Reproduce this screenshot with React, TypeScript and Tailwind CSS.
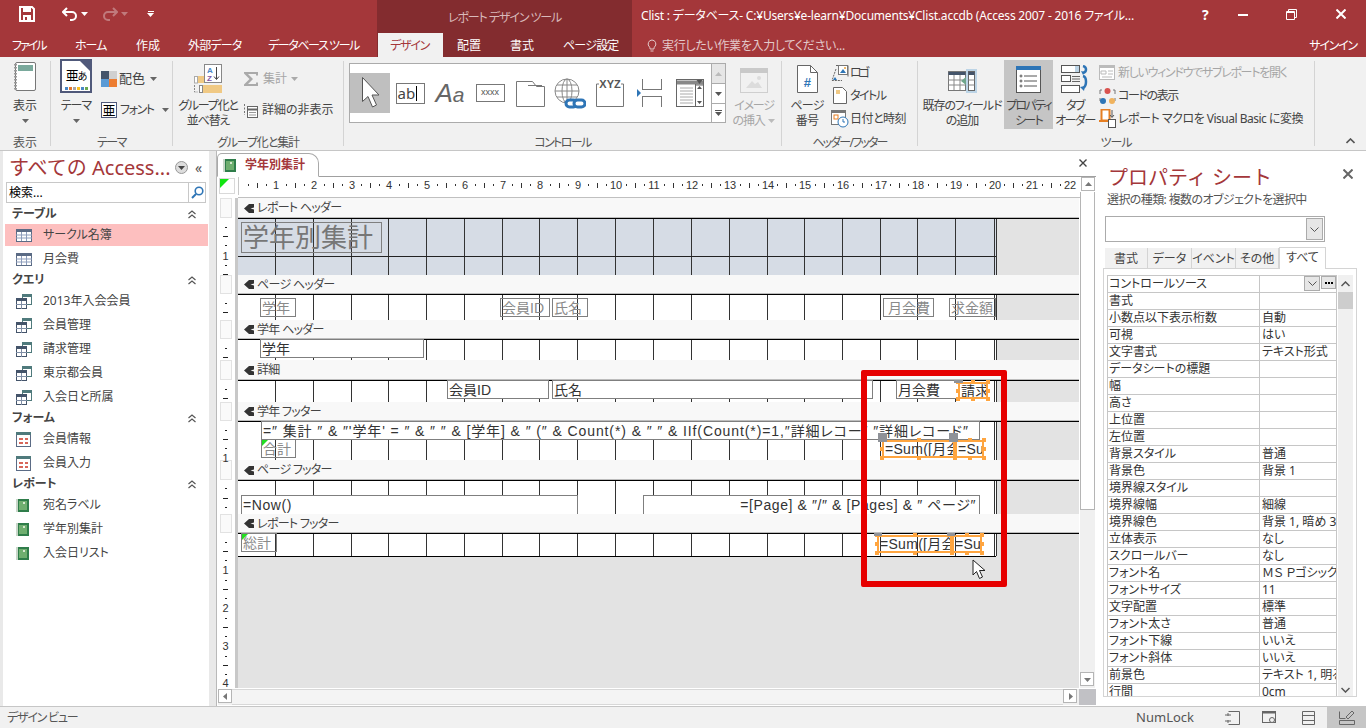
import React from "react";

const sans = "[font-family:'Noto_Sans','Noto_Sans_CJK_JP',sans-serif] [font-feature-settings:'palt']";

/* ---------- small drawings ---------- */
const Svg = ({ w, h, children, className }: { w: number; h: number; children: React.ReactNode; className?: string }) => (
  <svg width={w} height={h} viewBox={`0 0 ${w} ${h}`} className={className} style={{ display: "block", flex: "none" }}>
    {children}
  </svg>
);

const Caret = ({ c = "#666" }: { c?: string }) => (
  <Svg w={7} h={4} className="inline-block"><path d="M0 0h7L3.5 4z" fill={c} /></Svg>
);

const ViewIcon = () => (
  <Svg w={26} h={32}>
    <rect x="3.5" y="1.5" width="20" height="28" rx="1.5" fill="#fff" stroke="#777" />
    <rect x="6" y="4" width="15" height="6" fill="#7aa99c" />
    <path d="M3.5 3v26" stroke="#999" strokeWidth="3" strokeDasharray="1.5 1.5" />
  </Svg>
);
const ThemeIcon = () => (
  <div className="w-[32px] h-[34px] border-2 border-[#50597a] bg-white flex flex-col items-center relative">
    <span className="text-[13px] leading-[20px] mt-[4px] text-black tracking-[-1px]">亜<span className="text-[10px]">あ</span></span>
    <div className="flex gap-[1px] mt-[1px]">
      {["#4a86c5", "#e8772e", "#a6a6a6", "#fcc21b", "#4a86c5", "#6aa84f"].map((c, i) => (
        <div key={i} className="w-[3px] h-[3px]" style={{ background: c }} />
      ))}
    </div>
    <Svg w={10} h={10} className="absolute right-0 top-0"><path d="M0 0h10v10z" fill="#50597a" /></Svg>
  </div>
);
const ColorIcon = () => (
  <Svg w={16} h={16}>
    <rect width="8" height="8" fill="#44546a" /><rect x="8" width="8" height="8" fill="#d0d0d0" />
    <rect y="8" width="8" height="8" fill="#5b9bd5" /><rect x="8" y="8" width="8" height="8" fill="#ed7d31" />
  </Svg>
);
const FontIcon = () => (
  <div className="w-[16px] h-[16px] border border-[#50597a] bg-white text-[13px] leading-[14px] text-center text-black">亜</div>
);
const SortIcon = () => (
  <Svg w={30} h={29}>
    <rect x="11.5" y="0.5" width="17" height="18" fill="#fff" stroke="#888" />
    <text x="14" y="9" fontSize="8" fontWeight="700" fill="#4a86c5" fontFamily="Liberation Sans">A</text>
    <text x="14" y="17" fontSize="8" fontWeight="700" fill="#7d55a5" fontFamily="Liberation Sans">Z</text>
    <path d="M23.5 3v12M21 12.5l2.5 3 2.5-3" stroke="#444" fill="none" />
    <rect x="4" y="12" width="7" height="7" fill="#f0c984" /><rect x="1.5" y="12.5" width="3" height="6.5" fill="#fff" stroke="#aaa" />
    <rect x="10" y="21" width="19" height="8" fill="#f0c984" /><rect x="6.5" y="21.5" width="3" height="7" fill="#fff" stroke="#888" />
    <path d="M1.5 21v7h3" stroke="#888" fill="none" strokeDasharray="2 1" />
  </Svg>
);
const SigmaIcon = () => (
  <Svg w={16} h={16}><path d="M1 1h14v3.5h-2V3H5l5 5-5 5h8v-1.5h2V15H1v-1.5L6.5 8 1 2.5z" fill="#aaa" /></Svg>
);
const HideIcon = () => (
  <Svg w={15} h={15}>
    <rect x="4.5" y="3.5" width="10" height="11" fill="#fff" stroke="#666" />
    <path d="M4.5 6.5h10" stroke="#666" strokeWidth="2" /><path d="M6 9.5h7M6 12h7" stroke="#999" />
    <path d="M1.5 1v11" stroke="#777" strokeDasharray="2 1.5" />
  </Svg>
);
const ArrowIcon = () => (
  <Svg w={20} h={34}>
    <path d="M2.5 1.5v24l5.5-5 4.5 10.5 4-2-4.5-10h7z" fill="#fff" stroke="#555" strokeWidth="1" />
  </Svg>
);
const LabelIcon = () => (
  <div className="w-[29px] h-[21px] border border-[#777] bg-white flex items-center pl-[1px] text-[#444] text-[15px] leading-none">
    ab<span className="w-[1px] h-[15px] bg-black ml-[1px]" />
  </div>
);
const AaIcon = () => <span className="[font-family:'Liberation_Sans',sans-serif] italic text-[26px] leading-none text-[#666]">A<span className="text-[21px]">a</span></span>;
const XxxxIcon = () => (
  <div className="w-[29px] h-[18px] border border-[#777] bg-white text-[9px] leading-[15px] text-center text-[#555] [font-family:'Liberation_Sans',sans-serif]">xxxx</div>
);
const FolderIcon = () => (
  <Svg w={29} h={27}>
    <path d="M0.5 26.5V1.5h16l4 5h8v20z" fill="#fff" stroke="#777" />
    <path d="M12 5.5h14" stroke="#777" />
  </Svg>
);
const GlobeIcon = () => (
  <Svg w={32} h={31}>
    <g stroke="#888" fill="none">
      <circle cx="13" cy="13" r="12" />
      <ellipse cx="13" cy="13" rx="5" ry="12" />
      <path d="M1 13h24M3 7h20M3 19h20M13 1v24" />
    </g>
    <g stroke="#2e75b6" strokeWidth="3" fill="#fff">
      <rect x="12" y="22" width="11" height="7" rx="3.5" />
      <rect x="20" y="22" width="11" height="7" rx="3.5" />
    </g>
  </Svg>
);
const XyzIcon = () => (
  <Svg w={29} h={28}>
    <path d="M3 5H0.5v22.5h27V5H25" fill="#fff" stroke="#777" />
    <text x="14" y="9" textAnchor="middle" fontSize="11" fontWeight="700" fill="#555" fontFamily="Liberation Sans">XYZ</text>
  </Svg>
);
const BreakIcon = () => (
  <Svg w={26} h={28}>
    <path d="M5.5 0v11M24.5 0v11M5.5 17v11M24.5 17v11M5.5 10.5h19M5.5 17.5h19" stroke="#777" fill="none" />
    <path d="M0 10l4 4-4 4z" fill="#2e75b6" />
  </Svg>
);
const ListIcon = () => (
  <Svg w={28} h={28}>
    <rect x="0.5" y="0.5" width="27" height="27" fill="#fff" stroke="#666" />
    <path d="M1 3.5h26" stroke="#888" strokeWidth="4" />
    <path d="M4 9h13M4 12h13M4 15h13M4 18h13M4 21h13M4 24h13" stroke="#aaa" />
    <path d="M19.5 5v22M20 6h7" stroke="#666" />
    <path d="M20.5 1h6l-3 4zM23.5 7l2.5 3h-5zM21 22h5l-2.5 3z" fill="#555" />
  </Svg>
);
const ImageIcon = () => (
  <Svg w={28} h={25}>
    <rect x="0.5" y="0.5" width="27" height="24" fill="#f1f1f1" stroke="#cfcfcf" />
    <rect x="0" y="0" width="28" height="5" fill="#c9c9c9" />
    <path d="M6 20l6-7 3 3 3-2 4 6z" fill="#dcdcdc" /><circle cx="19" cy="10" r="2" fill="#dcdcdc" />
  </Svg>
);
const PageIcon = () => (
  <Svg w={21} h={28}>
    <path d="M0.5 0.5h13l7 7v20h-20z" fill="#fff" stroke="#666" />
    <path d="M13.5 0.5v7h7" fill="none" stroke="#666" />
    <text x="10" y="22" textAnchor="middle" fontSize="13" fontWeight="700" fill="#2e75b6" fontFamily="Liberation Sans">#</text>
  </Svg>
);
const LogoIcon = () => (
  <Svg w={18} h={18}>
    <path d="M5 1.5h12v11" fill="none" stroke="#666" />
    <rect x="7.5" y="1.5" width="9" height="9" fill="#fff" stroke="#777" />
    <path d="M9 9l3-4 3 4z" fill="#2e75b6" /><circle cx="14" cy="4" r="1" fill="#e8a33c" />
    <path d="M5 5L1 16.5h10" fill="none" stroke="#666" strokeDasharray="2 1" />
    <path d="M2 16l2-3 2 3z" fill="#2e75b6" />
  </Svg>
);
const TitleIcon = () => (
  <Svg w={14} h={17}>
    <path d="M0.5 0.5h9l4 4v12h-13z" fill="#fff" stroke="#666" />
    <rect x="3" y="3" width="4" height="4" fill="#f0c984" />
  </Svg>
);
const DateIcon = () => (
  <Svg w={18} h={19}>
    <rect x="0.5" y="1.5" width="14" height="14" fill="#fff" stroke="#777" />
    <rect x="0" y="1" width="15" height="3" fill="#777" />
    <rect x="3" y="6" width="4" height="4" fill="#fff" stroke="#e67e22" />
    <circle cx="12" cy="13" r="5" fill="#fff" stroke="#2e75b6" /><path d="M12 10v3h2" stroke="#2e75b6" fill="none" />
  </Svg>
);
const ExistingIcon = () => (
  <Svg w={29} h={24}>
    <rect x="0.5" y="2.5" width="17" height="19" fill="#fff" stroke="#777" />
    <path d="M0.5 4.5h17" stroke="#44546a" strokeWidth="3" />
    <path d="M0.5 11h17M0.5 16h17M6 6v15M12 6v15" stroke="#888" />
    <rect x="18" y="0" width="11" height="24" fill="#bcd4e6" />
    <rect x="20.5" y="2.5" width="6" height="19" fill="#fff" stroke="#666" />
    <path d="M20.5 4.5h6" stroke="#44546a" strokeWidth="3" /><path d="M20.5 11h6M20.5 16h6" stroke="#888" />
    <path d="M18 8v8l-5-4z" fill="#6fa58b" />
  </Svg>
);
const PropIcon = () => (
  <Svg w={25} h={27}>
    <rect x="0.5" y="0.5" width="24" height="26" fill="#fff" stroke="#555" />
    <rect x="0" y="0" width="25" height="4" fill="#2e75b6" />
    <g stroke="#555" fill="none">
      <circle cx="5" cy="10" r="1" /><circle cx="5" cy="15" r="1" /><circle cx="5" cy="20" r="1" />
      <path d="M8 10h13M8 15h13M8 20h13" />
    </g>
  </Svg>
);
const TabOrderIcon = () => (
  <Svg w={28} h={28}>
    <g fill="#fff" stroke="#555">
      <rect x="0.5" y="0.5" width="18" height="7" /><rect x="0.5" y="10.5" width="9" height="6" /><rect x="0.5" y="20.5" width="18" height="7" />
    </g>
    <rect x="14" y="1" width="4" height="6" fill="#bcd4e6" />
    <path d="M11 11.5h8M11 14h8M11 16.5h8" stroke="#666" />
    <path d="M22 1c4 1 4 6 0 7M22 11c4 1 4 10 0 12" fill="none" stroke="#2e75b6" strokeWidth="2.5" />
    <path d="M20 6l4 1-2 3zM19 22l5-1-1 5z" fill="#2e75b6" />
  </Svg>
);
const SubRepIcon = () => (
  <Svg w={16} h={15}>
    <rect x="0.5" y="0.5" width="15" height="14" fill="#fff" stroke="#bbb" />
    <rect x="0" y="0" width="16" height="3" fill="#bbb" />
    <path d="M2 6h5v3H2zM9 6h5M9 9h5M3 12h10" stroke="#bbb" fill="none" />
  </Svg>
);
const CodeIcon = () => (
  <Svg w={17} h={18}>
    <path d="M3 3H1v4M14 3h2v4M1 11v3M16 11v3" stroke="#777" fill="none" />
    <circle cx="8.5" cy="4" r="3" fill="#d9534f" /><circle cx="4" cy="14" r="3" fill="#2e75b6" /><circle cx="13" cy="14" r="3" fill="#f0b35e" />
  </Svg>
);
const MacroIcon = () => (
  <Svg w={17} h={19}>
    <rect x="2.5" y="0.5" width="8" height="11" fill="#fff" stroke="#e67e22" strokeWidth="2" />
    <path d="M0 12h9" stroke="#e67e22" strokeWidth="2" />
    <path d="M13 1v7M11 6l2 2.5L15 6" stroke="#555" fill="none" />
    <rect x="9.5" y="10.5" width="7" height="8" fill="#fff" stroke="#555" />
  </Svg>
);

/* nav icons */
const TblIcon = () => (
  <Svg w={16} h={13}>
    <rect x="0.5" y="0.5" width="15" height="12" fill="#fff" stroke="#5b6b85" />
    <rect x="0" y="0" width="16" height="3" fill="#5b6b85" />
    <path d="M0 6h16M0 9h16M5.5 3v9M10.5 3v9" stroke="#8d9dbb" />
  </Svg>
);
const QryIcon = () => (
  <Svg w={16} h={15}>
    <rect x="6.5" y="0.5" width="9" height="10" fill="#fff" stroke="#4f7a7c" />
    <rect x="6" y="0" width="10" height="3" fill="#4f7a7c" />
    <rect x="0.5" y="4.5" width="10" height="10" fill="#fff" stroke="#44546a" />
    <rect x="0" y="4" width="11" height="3" fill="#44546a" />
    <path d="M0 10.5h11M5.5 7v8" stroke="#7f8ea6" />
  </Svg>
);
const FrmIcon = () => (
  <Svg w={15} h={15}>
    <rect x="0.5" y="0.5" width="14" height="14" fill="#fff" stroke="#5b6b85" />
    <rect x="0" y="0" width="15" height="3" fill="#4f7a7c" />
    <path d="M3 6h4v2H3zM9 6h3v2H9zM3 10h4v2H3zM9 10h3v2H9z" fill="#d8675a" />
  </Svg>
);
const RptIcon = ({ s = 13 }: { s?: number }) => (
  <Svg w={s} h={s}>
    <rect width={s} height={s} fill="#2f7d4a" />
    <rect x="0" y="0" width="2" height={s} fill="#c9d7c9" />
    <rect x="3" y="2" width={s - 5} height={s - 4} fill="#6fae6f" />
    <rect x={s - 6} y="3" width="2" height="2" fill="#d7e7d0" />
  </Svg>
);

/* ---------- ribbon helpers ---------- */
const Large = ({ w, icon, lines, active, dim, tr = "tracking-[-1px]" }: { w: number; icon: React.ReactNode; lines: React.ReactNode[]; active?: boolean; dim?: boolean; tr?: string }) => (
  <div
    className={`mt-[3px] h-[69px] flex flex-col items-center flex-none ${tr} ${active ? "bg-[#c5c5c5]" : ""} ${dim ? "text-[#a6a6a6]" : "text-[#444]"}`}
    style={{ width: w }}
  >
    <div className="h-[38px] flex-none flex items-end justify-center pb-[5px]">{icon}</div>
    {lines.map((l, i) => (
      <div key={i} className="h-[15px] flex-none leading-[15px] text-[12px] whitespace-nowrap flex items-center">{l}</div>
    ))}
  </div>
);

const Small = ({ icon, text, dim, gap = "gap-[3px]", tr }: { icon: React.ReactNode; text: React.ReactNode; dim?: boolean; gap?: string; tr: string }) => (
  <div className={`flex items-center ${gap} h-[23px] text-[12px] whitespace-nowrap ${dim ? "text-[#a6a6a6]" : "text-[#444]"}`}>
    {icon}
    <span className={tr}>{text}</span>
  </div>
);

const Group = ({ w, label, tr = "tracking-[-1px]", children }: { w: number; label?: string; tr?: string; children: React.ReactNode }) => (
  <div className="flex flex-none" style={{ width: w }}>
    <div className="flex-1 flex flex-col min-w-0">
      <div className="h-[76px] flex-none flex">{children}</div>
      <div className={`h-[17px] leading-[19px] text-center text-[12px] text-[#555] whitespace-nowrap ${tr}`}>{label}</div>
    </div>
    <div className="w-px my-[4px] bg-[#d4d4d4]" />
  </div>
);

const GalleryItem = ({ children, active }: { children: React.ReactNode; active?: boolean }) => (
  <div className={`w-[40px] h-[40px] flex items-center justify-center flex-none ${active ? "bg-[#bfbfbf]" : ""}`}>{children}</div>
);

const Ribbon = () => (
  <div className="h-[93px] flex-none bg-[#f1f1f1] flex">
    <Group w={51} label="表示" tr="tracking-normal">
      <Large w={50} tr="tracking-normal" icon={<ViewIcon />} lines={["表示", <Caret key="c" />]} />
    </Group>
    <Group w={122} label="テーマ" tr="tracking-[-1.5px]">
      <Large w={50} icon={<ThemeIcon />} lines={["テーマ", <Caret key="c" />]} />
      <div className="flex flex-col pt-[12px] gap-[11px]">
        <div className="flex items-center gap-[2px] h-[20px] text-[13px] text-[#444] whitespace-nowrap"><ColorIcon /><span>配色</span><span className="ml-[3px]"><Caret /></span></div>
        <div className="flex items-center gap-[3px] h-[20px] text-[12px] text-[#444] whitespace-nowrap"><FontIcon /><span className="tracking-[-1.4px]">フォント</span><span className="ml-[5px]"><Caret /></span></div>
      </div>
    </Group>
    <Group w={171} label="グループ化と集計" tr="tracking-[-1.1px]">
      <Large w={70} tr="tracking-[-1.2px]" icon={<SortIcon />} lines={["グループ化と", "並べ替え"]} />
      <div className="flex flex-col pt-[12px] gap-[11px]">
        <div className="flex items-center gap-[4px] h-[20px] text-[12px] text-[#a6a6a6] whitespace-nowrap"><SigmaIcon /><span>集計</span><Caret c="#aaa" /></div>
        <div className="flex items-center gap-[4px] h-[20px] text-[12px] text-[#444] whitespace-nowrap"><HideIcon /><span>詳細の非表示</span></div>
      </div>
    </Group>
    <Group w={438} label="コントロール" tr="tracking-[-1.6px]">
      <div className="pt-[6px] pl-[5px] flex flex-none">
        <div className="w-[363px] h-[60px] bg-white border border-[#ababab] flex items-start pt-[9px]">
          <GalleryItem active><ArrowIcon /></GalleryItem>
          <GalleryItem><LabelIcon /></GalleryItem>
          <GalleryItem><AaIcon /></GalleryItem>
          <GalleryItem><XxxxIcon /></GalleryItem>
          <GalleryItem><FolderIcon /></GalleryItem>
          <GalleryItem><GlobeIcon /></GalleryItem>
          <GalleryItem><XyzIcon /></GalleryItem>
          <GalleryItem><BreakIcon /></GalleryItem>
          <GalleryItem><ListIcon /></GalleryItem>
        </div>
        <div className="w-[14px] h-[60px] flex flex-col border border-l-0 border-[#ababab] bg-white">
          <div className="h-[20px] bg-[#e6e6e6] flex items-center justify-center border-b border-[#ababab]"><Svg w={7} h={4}><path d="M0 4h7L3.5 0z" fill="#bbb" /></Svg></div>
          <div className="h-[20px] flex items-center justify-center border-b border-[#ababab]"><Caret c="#555" /></div>
          <div className="flex-1 flex flex-col items-center justify-center gap-[1px]"><div className="w-[7px] h-px bg-[#555]" /><Caret c="#555" /></div>
        </div>
      </div>
      <Large w={56} dim tr="tracking-[-1.2px]" icon={<ImageIcon />} lines={["イメージ", <span key="a" className="flex items-center gap-[4px]">の挿入<Caret c="#bbb" /></span>]} />
    </Group>
    <Group w={136} label="ヘッダー/フッター" tr="tracking-[-1.8px]">
      <Large w={50} tr="tracking-[-0.8px]" icon={<PageIcon />} lines={["ページ", "番号"]} />
      <div className="flex flex-col pt-[4px] -ml-[1px]">
        <Small tr="tracking-[-3px]" icon={<LogoIcon />} text="ロゴ" gap="gap-[1px]" />
        <Small tr="tracking-[-1.5px]" icon={<div className="w-[18px] flex justify-center"><TitleIcon /></div>} text="タイトル" gap="gap-[1px]" />
        <Small tr="tracking-[-0.5px]" icon={<DateIcon />} text="日付と時刻" gap="gap-[1px]" />
      </div>
    </Group>
    <Group w={397} label="ツール">
      <div className="pl-[2px] flex flex-none">
        <Large w={84} icon={<ExistingIcon />} lines={["既存のフィールド", "の追加"]} />
      </div>
      <Large w={49} active tr="tracking-[-1.8px]" icon={<PropIcon />} lines={["プロパティ", "シート"]} />
      <Large w={44} tr="tracking-[-1.5px]" icon={<TabOrderIcon />} lines={["タブ", "オーダー"]} />
      <div className="flex flex-col pt-[4px] ml-[2px]">
        <Small tr="tracking-[-1.3px]" dim icon={<div className="w-[17px]"><SubRepIcon /></div>} text="新しいウィンドウでサブレポートを開く" gap="gap-[2px]" />
        <Small tr="tracking-[-1.4px]" icon={<CodeIcon />} text="コードの表示" gap="gap-[2px]" />
        <Small tr="tracking-[-0.5px]" icon={<MacroIcon />} text="レポート マクロを Visual Basic に変換" gap="gap-[2px]" />
      </div>
    </Group>
    <div className="flex-1 flex items-end justify-end pr-[11px] pb-[6px]">
      <Svg w={9} h={6}><path d="M0.5 5l4-4 4 4" fill="none" stroke="#555" strokeWidth="1.6" /></Svg>
    </div>
  </div>
);

/* ---------- title + tabs ---------- */
const TitleBar = () => (
  <div className="h-[28px] flex-none bg-[#a4373a] flex text-white text-[12px]">
    <div className="w-[377px] flex items-center flex-none">
      <div className="ml-[19px]">
        <Svg w={16} h={16}>
          <path d="M1 1h12l2 2v12H1z" fill="none" stroke="#fff" strokeWidth="2" />
          <rect x="4" y="1" width="8" height="5" fill="#fff" /><rect x="4" y="9" width="8" height="6" fill="#fff" />
          <rect x="6" y="11" width="2" height="3" fill="#a4373a" />
        </Svg>
      </div>
      <div className="ml-[27px]">
        <Svg w={16} h={15}><path d="M5 1L1 5l4 4M1.5 5H10a4 4 0 010 8H8" fill="none" stroke="#fff" strokeWidth="2" /></Svg>
      </div>
      <div className="ml-[3px]"><Caret c="#fff" /></div>
      <div className="ml-[14px]">
        <Svg w={16} h={15}><path d="M11 1l4 4-4 4M14.5 5H6a4 4 0 000 8h2" fill="none" stroke="#c07a7c" strokeWidth="2" /></Svg>
      </div>
      <div className="ml-[3px]"><Caret c="#c07a7c" /></div>
      <div className="ml-[19px] flex flex-col items-center gap-[1px]"><div className="w-[6px] h-px bg-white" /><Caret c="#fff" /></div>
    </div>
    <div className="w-[255px] bg-[#832c2f] flex-none pl-[71px] leading-[36px] text-[#d9b9ba] tracking-[-1.1px]">レポート デザイン ツール</div>
    <div className="flex-1 pl-[9px] leading-[32px] whitespace-nowrap tracking-[-0.2px]">Clist : データベース- C:¥Users¥e-learn¥Documents¥Clist.accdb (Access 2007 - 2016 ファイル…</div>
    <div className="flex-none w-[178px] flex items-center text-white">
      <span className="ml-[14px] w-[12px] text-[14px] font-bold">?</span>
      <div className="ml-[24px] w-[10px] h-[2px] bg-white mt-[2px]" />
      <div className="ml-[38px]">
        <Svg w={11} h={11}><path d="M2.5 2.5v-2h8v8h-2M0.5 2.5h8v8h-8zM0.5 3.5h8" fill="none" stroke="#fff" /></Svg>
      </div>
      <div className="ml-[39px]">
        <Svg w={10} h={10}><path d="M0.5 0.5l9 9M9.5 0.5l-9 9" stroke="#fff" strokeWidth="2" /></Svg>
      </div>
    </div>
  </div>
);

const TabItem = ({ w, pl, tr, children }: { w: number; pl: number; tr: string; children: React.ReactNode }) => (
  <div className={`flex-none leading-[36px] whitespace-nowrap ${tr}`} style={{ width: w, paddingLeft: pl }}>{children}</div>
);

const TabBar = () => (
  <div className="h-[29px] flex-none bg-[#a4373a] flex text-white text-[12px]">
    <TabItem w={62} pl={12} tr="tracking-[-2px]">ファイル</TabItem>
    <TabItem w={61} pl={13} tr="tracking-[-1px]">ホーム</TabItem>
    <TabItem w={52} pl={13} tr="tracking-normal">作成</TabItem>
    <TabItem w={80} pl={13} tr="tracking-[-0.8px]">外部データ</TabItem>
    <TabItem w={122} pl={13} tr="tracking-[-1.4px]">データベース ツール</TabItem>
    <div className="w-[255px] flex-none bg-[#832c2f] flex">
      <div className="w-[65px] ml-[1px] mt-[5px] bg-[#f1f1f1] text-[#a4373a] pl-[12px] leading-[26px] tracking-[-1.2px]">デザイン</div>
      <div className="ml-[14px] w-[53px] leading-[36px]">配置</div>
      <div className="w-[53px] leading-[36px]">書式</div>
      <div className="leading-[36px] whitespace-nowrap tracking-[-0.8px]">ページ設定</div>
    </div>
    <div className="ml-[15px] mt-[11px]">
      <Svg w={10} h={14}><path d="M5 1a4 4 0 00-2.5 7c.6.6 .5 1 .5 2h4c0-1-.1-1.4.5-2A4 4 0 005 1zM3.5 12h3" fill="none" stroke="#e3c9ca" /></Svg>
    </div>
    <div className="ml-[5px] leading-[36px] text-[#e3c9ca] whitespace-nowrap tracking-[-0.3px]">実行したい作業を入力してください...</div>
    <div className="ml-auto pr-[9px] leading-[36px] tracking-[-1.2px]">サインイン</div>
  </div>
);

/* ---------- navigation pane ---------- */
const navData: { g: string; items: { t: string; k: "t" | "q" | "f" | "r"; on?: boolean }[] }[] = [
  { g: "テーブル", items: [{ t: "サークル名簿", k: "t", on: true }, { t: "月会費", k: "t" }] },
  { g: "クエリ", items: [{ t: "2013年入会会員", k: "q" }, { t: "会員管理", k: "q" }, { t: "請求管理", k: "q" }, { t: "東京都会員", k: "q" }, { t: "入会日と所属", k: "q" }] },
  { g: "フォーム", items: [{ t: "会員情報", k: "f" }, { t: "会員入力", k: "f" }] },
  { g: "レポート", items: [{ t: "宛名ラベル", k: "r" }, { t: "学年別集計", k: "r" }, { t: "入会日リスト", k: "r" }] },
];
const kindIcon = { t: <TblIcon />, q: <QryIcon />, f: <FrmIcon />, r: <RptIcon /> };

const Chev2 = () => (
  <Svg w={8} h={9}><path d="M0.5 4L4 1l3.5 3M0.5 8L4 5l3.5 3" fill="none" stroke="#555" strokeWidth="1.2" /></Svg>
);

const Nav = () => (
  <div className="ml-[3px] w-[206px] flex-none bg-white flex flex-col">
    <div className="h-[31px] flex items-center pl-[6px] pt-[2px] flex-none">
      <span className="text-[20px] text-[#a4373a] whitespace-nowrap w-[165px] [font-feature-settings:normal]">すべての Access...</span>
      <div className="w-[13px] h-[13px] rounded-full border border-[#999] bg-[#ddd] flex items-center justify-center ml-[1px]"><Caret c="#444" /></div>
      <span className="ml-[7px] text-[14px] leading-none text-[#555]">«</span>
    </div>
    <div className="mx-[3px] h-[21px] flex-none border border-[#c8c8c8] flex items-center pl-[2px] text-[12px] text-black">
      <span className="flex-1">検索...</span>
      <div className="w-[17px] h-full border-l border-[#c8c8c8] flex items-center justify-center">
        <Svg w={13} h={13}><circle cx="8" cy="5" r="3.8" fill="none" stroke="#2e75b6" strokeWidth="1.6" /><path d="M5 8l-4 4" stroke="#2e75b6" strokeWidth="2" /></Svg>
      </div>
    </div>
    <div className="pt-[2px]">
      {navData.map((g) => (
        <div key={g.g}>
          <div className="h-[18px] flex items-center justify-between pl-[9px] pr-[13px] text-[12px] font-bold text-[#444]">
            <span>{g.g}</span><Chev2 />
          </div>
          {g.items.map((it) => (
            <div key={it.t} className="h-[24px] flex items-center">
              <div className={`w-[203px] ml-[2px] h-[22px] flex items-center pl-[11px] text-[12px] text-[#444] ${it.on ? "bg-[#fdbfbf]" : ""}`}>
                <div className="w-[27px]">{kindIcon[it.k]}</div>
                <span>{it.t}</span>
              </div>
            </div>
          ))}
        </div>
      ))}
    </div>
  </div>
);

/* ---------- report design surface ---------- */
const gridX = [275, 313, 351, 388, 426, 464, 502, 539, 577, 615, 653, 691, 729, 767, 804, 842, 880, 917, 955, 994, 996];
const rulerX = [275, 313, 351, 388, 426, 464, 502, 539, 577, 615, 653, 691, 729, 767, 804, 842, 880, 917, 955, 994, 1031, 1069];

type Ctl = { x: number; y: number; w: number; h: number; t?: string; k?: "label" | "box"; green?: boolean; right?: boolean; big?: boolean; clip?: boolean; tr?: string };

const Control = ({ c, top }: { c: Ctl; top: number }) => (
  <div
    className={`absolute overflow-hidden whitespace-nowrap border border-[#7f7f7f] leading-none flex items-center [font-family:'Liberation_Sans','Noto_Sans_CJK_JP',sans-serif] ${
      c.k === "box" ? "text-[#333] bg-white" : "text-[#8a8a8a]"
    } ${c.big ? "text-[26px] pl-[1px] text-[#777]" : "text-[14px] pl-[1px]"} ${c.right ? "justify-end pr-[3px]" : ""} ${c.clip ? "border-b-0" : ""} ${c.tr ?? ""}`}
    style={{ left: c.x - 238, top: c.y - top, width: c.w, height: c.h }}
  >
    {c.t}
    {c.green && <span className="absolute left-0 top-0 w-0 h-0 border-t-[6px] border-t-[#22dd22] border-r-[6px] border-r-transparent" />}
  </div>
);

const Sel = ({ x, y, w, h, t, top }: { x: number; y: number; w: number; h: number; t: string; top: number }) => {
  const H = [
    [0, 0], [w / 2, 0], [w, 0],
    [0, h / 2], [w, h / 2],
    [0, h], [w / 2, h], [w, h],
  ];
  return (
    <div className="absolute" style={{ left: x - 238, top: y - top, width: w, height: h }}>
      <div className="absolute inset-0 border-2 border-[#ffa53f] overflow-hidden whitespace-nowrap text-[14px] leading-[14px] text-[#333] pl-[1px] tracking-[0.3px] [font-family:'Liberation_Sans','Noto_Sans_CJK_JP',sans-serif]">{t}</div>
      {H.map(([a, b], i) => (
        <div key={i} className="absolute w-[4px] h-[4px] bg-[#ffa53f]" style={{ left: a - 2, top: b - 2 }} />
      ))}
    </div>
  );
};

const Grip = ({ x, y, w, h, top }: { x: number; y: number; w: number; h: number; top: number }) => (
  <div className="absolute bg-[#8f9298]" style={{ left: x - 238, top: y - top, width: w, height: h }} />
);

const Section = ({ name, barH, bodyH, blue, rule, bottom, children }: { name: string; barH: number; bodyH: number; blue?: boolean; rule?: number; bottom?: boolean; children?: React.ReactNode }) => (
  <div className="flex-none">
    <div className="flex items-center bg-[#f8f8f8] border-b border-[#bdbdbd] pl-[6px] pt-[1px] text-[12px] text-[#444] tracking-[-0.7px]" style={{ height: barH }}>
      <div className="w-[13px]">
        <Svg w={10} h={9}><path d="M0 4.5L5 0h5v3.5L6.5 4.5 10 5.5V9H5z" fill="#333" /></Svg>
      </div>
      <span>{name}</span>
    </div>
    <div className="flex border-t border-black" style={{ height: bodyH }}>
      <div className={`relative w-[758px] flex-none ${blue ? "bg-[#d6dce5]" : "bg-white"} ${bottom ? "border-b border-black" : ""}`}>
        {gridX.map((x) => (
          <div key={x} className="absolute top-0 bottom-0 w-px bg-[#333]" style={{ left: x - 238 }} />
        ))}
        {rule !== undefined && <div className="absolute left-0 right-0 h-px bg-[#222]" style={{ top: rule }} />}
        {children}
      </div>
      <div className="flex-1 bg-[#e3e3e3]" />
    </div>
  </div>
);

const vMarks: [number, string][] = [
  [227, "s"], [236, "l"], [245, "s"], [256, "1"], [265, "s"], [274, "l"],
  [303, "s"], [312, "l"], [348, "s"], [357, "l"], [389, "s"], [398, "l"],
  [430, "s"], [439, "l"], [448, "s"], [458, "1"],
  [488, "s"], [498, "l"], [507, "s"],
  [542, "s"], [551, "l"], [560, "s"], [570, "1"], [580, "s"], [589, "l"], [598, "s"], [608, "2"],
  [618, "s"], [627, "l"], [636, "s"], [646, "3"], [656, "s"], [665, "l"], [674, "s"], [683, "4"],
];
const vBands = [[198, 218], [275, 294], [320, 339], [360, 380], [402, 421], [460, 480], [514, 533]];

const VRuler = () => (
  <div className="relative w-[20px] flex-none bg-white border-r-[3px] border-[#c8c8c8] overflow-hidden">
    {vBands.map(([a, b]) => (
      <div key={a} className="absolute left-[2px] w-[12px] border border-[#e2e2e2] bg-[#fafafa]" style={{ top: a - 198, height: b - a }} />
    ))}
    {vMarks.map(([y, k], i) =>
      k === "s" || k === "l" ? (
        <div key={i} className={`absolute h-px bg-[#222] ${k === "s" ? "w-[2px] left-[7px]" : "w-[5px] left-[5px]"}`} style={{ top: y - 198 }} />
      ) : (
        <span key={i} className="absolute left-0 w-[15px] text-center text-[11px] leading-none text-[#333] [font-family:'Liberation_Sans',sans-serif]" style={{ top: y - 198 - 5 }}>{k}</span>
      )
    )}
  </div>
);

const HRuler = () => (
  <div className="relative flex-1 border-l border-[#c8c8c8] h-[17px] bg-white overflow-hidden">
    {rulerX.map((x, i) => (
      <React.Fragment key={x}>
        <span className="absolute -translate-x-1/2 text-[11px] leading-[17px] text-[#333] [font-family:'Liberation_Sans',sans-serif]" style={{ left: x - 238 }}>{i + 1}</span>
        <div className="absolute w-px h-[5px] bg-[#333] top-[6px]" style={{ left: x - 238 - 19 }} />
        <div className="absolute w-px h-[2px] bg-[#333] top-[7px]" style={{ left: x - 238 - 28 }} />
        <div className="absolute w-px h-[2px] bg-[#333] top-[7px]" style={{ left: x - 238 - 10 }} />
      </React.Fragment>
    ))}
  </div>
);

const Cursor = () => (
  <Svg w={15} h={21}><path d="M1 1v15l3.5-3.5 3 7 3-1.5-3-6.5H13z" fill="#fff" stroke="#222" /></Svg>
);

const ScrollBtn = ({ d }: { d: string }) => (
  <div className="w-[14px] h-[14px] bg-white border border-[#b5b5b5] flex items-center justify-center flex-none">
    <Svg w={7} h={7}><path d={d} fill="#777" /></Svg>
  </div>
);

const Main = () => (
  <div className="w-[880px] flex-none bg-white flex flex-col ml-[7px] border-l border-[#b9b9b9]">
    <div className="h-[26px] flex-none flex items-end relative border-b border-[#a0a0a0]">
      <div className="w-[102px] h-[24px] -mb-px bg-white border border-b-white border-[#a9a9a9] rounded-t-[5px] rounded-tr-[10px] flex items-center pl-[5px]">
        <RptIcon />
        <span className="ml-[9px] text-[12px] font-bold text-[#a4373a]">学年別集計</span>
      </div>
      <div className="ml-auto mr-[9px] mb-[9px]">
        <Svg w={8} h={8}><path d="M0.5 0.5l7 7M7.5 0.5l-7 7" stroke="#444" strokeWidth="1.4" /></Svg>
      </div>
    </div>
    <div className="flex-1 flex flex-col pl-[1px] min-h-0">
      <div className="flex h-[21px] flex-none">
        <div className="w-[16px] h-[16px] mt-[1px] ml-[1px] flex-none border border-[#d9d9d9] relative">
          <span className="absolute left-0 top-0 w-0 h-0 border-t-[9px] border-t-[#11e511] border-r-[9px] border-r-transparent" />
        </div>
        <div className="flex-1 flex flex-col ml-[3px]"><HRuler /><div className="mt-[2px] h-px bg-[#c0c0c0]" /></div>
        <div className="w-[15px] flex-none ml-[1px]"><ScrollBtn d="M0 5h7L3.5 1z" /></div>
      </div>
      <div className="flex h-[490px] flex-none">
        <VRuler />
        <div className="relative w-[841px] flex-none bg-[#e3e3e3] flex flex-col">
          <Section name="レポート ヘッダー" barH={20} bodyH={57} blue rule={37}>
            <Control c={{ x: 241, y: 222, w: 141, h: 31, t: "学年別集計", big: true }} top={219} />
          </Section>
          <Section name="ページ ヘッダー" barH={19} bodyH={26}>
            <Control c={{ x: 260, y: 298, w: 36, h: 19, t: "学年" }} top={295} />
            <Control c={{ x: 500, y: 298, w: 50, h: 19, t: "会員ID" }} top={295} />
            <Control c={{ x: 552, y: 298, w: 36, h: 19, t: "氏名" }} top={295} />
            <Control c={{ x: 883, y: 298, w: 51, h: 19, t: "月会費", right: true }} top={295} />
            <Control c={{ x: 949, y: 298, w: 47, h: 19, t: "求金額" }} top={295} />
          </Section>
          <Section name="学年 ヘッダー" barH={19} bodyH={21}>
            <Control c={{ x: 260, y: 339, w: 164, h: 19, t: "学年", k: "box" }} top={340} />
          </Section>
          <Section name="詳細" barH={20} bodyH={22}>
            <Control c={{ x: 447, y: 380, w: 102, h: 19, t: "会員ID", k: "box" }} top={381} />
            <Control c={{ x: 552, y: 380, w: 321, h: 19, t: "氏名", k: "box" }} top={381} />
            <Control c={{ x: 896, y: 380, w: 63, h: 19, t: "月会費", k: "box" }} top={381} />
            <Sel x={958} y={382} w={30} h={17} t="請求" top={381} />
            <Grip x={954} y={380} w={9} h={3} top={381} />
          </Section>
          <Section name="学年 フッター" barH={19} bodyH={39}>
            <Control c={{ x: 261, y: 421, w: 719, h: 19, k: "box", t: "=″ 集計 ″ & ″'学年' = ″ & ″ ″ & [学年] & ″ (″ & Count(*) & ″ ″ & IIf(Count(*)=1,″詳細レコー″ ″詳細レコード″", tr: "tracking-[0.9px]" }} top={422} />
            <Control c={{ x: 261, y: 439, w: 35, h: 19, t: "合計", green: true }} top={422} />
            <Sel x={882} y={440} w={73} h={18} t="=Sum([月会" top={422} />
            <Sel x={955} y={440} w={29} h={18} t="=Su" top={422} />
            <Grip x={878} y={433} w={9} h={9} top={422} />
            <Grip x={949} y={433} w={9} h={9} top={422} />
          </Section>
          <Section name="ページ フッター" barH={20} bodyH={34}>
            <Control c={{ x: 241, y: 495, w: 337, h: 19, t: "=Now()", k: "box", clip: true, tr: "tracking-[0.6px]" }} top={481} />
            <Control c={{ x: 643, y: 495, w: 337, h: 19, t: "=[Page] & ″/″ & [Pages] & ″ ページ″", k: "box", right: true, clip: true, tr: "tracking-[0.6px]" }} top={481} />
          </Section>
          <Section name="レポート フッター" barH={19} bodyH={24} bottom>
            <Control c={{ x: 241, y: 533, w: 36, h: 19, t: "総計", green: true }} top={534} />
            <Sel x={877} y={535} w={75} h={18} t="=Sum([月会" top={534} />
            <Sel x={952} y={535} w={30} h={18} t="=Su" top={534} />
            <Grip x={874} y={533} w={8} h={3} top={534} />
            <Grip x={947} y={533} w={8} h={3} top={534} />
          </Section>
          <div className="absolute left-[623px] top-[172px] w-[146px] h-[217px] border-[6px] border-[#e60000] rounded-[2px]" />
          <div className="absolute left-[734px] top-[361px]"><Cursor /></div>
        </div>
        <div className="w-[15px] flex-none ml-[1px] bg-[#f0f0f0] flex flex-col">
          <div className="h-[318px] bg-white border border-[#b5b5b5] border-t-0 flex-none -mt-[6px]" />
          <div className="flex-1" />
          <ScrollBtn d="M0 2h7L3.5 6z" />
          <div className="h-[2px] flex-none" />
        </div>
      </div>
      <div className="h-[17px] flex-none flex items-stretch bg-[#f0f0f0] border-t border-white">
        <ScrollBtn d="M5 0v7L1 3.5z" />
        <div className="w-[831px] flex-none bg-[#f4f4f4] border-y border-[#d8d8d8]" />
        <ScrollBtn d="M2 0v7l4-3.5z" />
        <div className="flex-1 ml-[2px] bg-[#c1c1c5]" />
      </div>
    </div>
  </div>
);

/* ---------- property sheet ---------- */
const props: [string, string][] = [
  ["コントロールソース", ""], ["書式", ""], ["小数点以下表示桁数", "自動"], ["可視", "はい"], ["文字書式", "テキスト形式"],
  ["データシートの標題", ""], ["幅", ""], ["高さ", ""], ["上位置", ""], ["左位置", ""], ["背景スタイル", "普通"], ["背景色", "背景 1"],
  ["境界線スタイル", ""], ["境界線幅", "細線"], ["境界線色", "背景 1, 暗め 35%"], ["立体表示", "なし"], ["スクロールバー", "なし"],
  ["フォント名", "ＭＳ Ｐゴシック"], ["フォントサイズ", "11"], ["文字配置", "標準"], ["フォント太さ", "普通"], ["フォント下線", "いいえ"],
  ["フォント斜体", "いいえ"], ["前景色", "テキスト 1, 明るさ"], ["行間", "0cm"],
];

const PropSheet = () => (
  <div className="flex-1 bg-white flex flex-col min-w-0">
    <div className="h-[39px] flex-none flex justify-between pl-[12px] pr-[13px] pt-[15px]">
      <span className="text-[20px] leading-[24px] text-[#a4373a] [font-feature-settings:normal]">プロパティ シート</span>
      <div className="pt-[3px]"><Svg w={10} h={10}><path d="M0.5 0.5l9 9M9.5 0.5l-9 9" stroke="#666" strokeWidth="2" /></Svg></div>
    </div>
    <div className="pl-[11px] h-[17px] leading-[17px] flex-none mt-[1px] text-[12px] text-[#555] whitespace-nowrap tracking-[-0.6px]">選択の種類: 複数のオブジェクトを選択中</div>
    <div className="ml-[9px] mt-[8px] w-[220px] h-[26px] flex-none border border-[#ababab] flex justify-end items-center pr-[1px]">
      <div className="w-[17px] h-[22px] bg-[#e6e6e6] border border-[#ababab] flex items-center justify-center">
        <Svg w={9} h={5}><path d="M0.5 0.5l4 4 4-4" fill="none" stroke="#555" /></Svg>
      </div>
    </div>
    <div className="ml-[9px] mt-[5px] h-[21px] flex-none flex items-end text-[12px] text-[#444] relative z-10">
      {[["書式", 43], ["データ", 44], ["イベント", 44], ["その他", 43]].map(([t, w]) => (
        <div key={t as string} className="h-[20px] bg-[#f1f1f1] border-r border-[#d4d4d4] text-center leading-[21px]" style={{ width: w as number }}>{t}</div>
      ))}
      <div className="w-[47px] h-[22px] bg-white border border-b-0 border-[#d4d4d4] text-center leading-[20px] -mb-px">すべて</div>
    </div>
    <div className="ml-[7px] w-[254px] h-[429px] flex-none border border-[#d4d4d4] flex pt-[6px] pl-[3px] overflow-hidden">
      <div className="w-[230px] flex-none border border-[#c6c6c6] border-b-0 overflow-hidden h-[422px]">
        {props.map(([a, b], i) => (
          <div key={i} className="flex h-[17px] border-b border-[#c6c6c6] text-[12px] leading-[16px] text-[#333] whitespace-nowrap">
            <div className="w-[152px] flex-none border-r border-[#c6c6c6] pl-[1px] overflow-hidden">{a}</div>
            <div className="flex-1 overflow-hidden pl-[2px] relative">
              {b}
              {i === 0 && (
                <div className="absolute right-0 top-0 flex gap-[1px]">
                  <div className="w-[16px] h-[15px] bg-[#e6e6e6] border border-[#ababab] flex items-center justify-center"><Svg w={9} h={5}><path d="M0.5 0.5l4 4 4-4" fill="none" stroke="#555" /></Svg></div>
                  <div className="w-[15px] h-[13px] bg-[#e6e6e6] border border-[#ababab] flex items-center justify-center gap-[1px]">
                    <i className="w-[2px] h-[2px] bg-black" /><i className="w-[2px] h-[2px] bg-black" /><i className="w-[2px] h-[2px] bg-black" />
                  </div>
                </div>
              )}
            </div>
          </div>
        ))}
      </div>
      <div className="w-[15px] h-[422px] ml-[1px] bg-[#f0f0f0] flex flex-col flex-none">
        <div className="h-[17px] flex items-center justify-center"><Svg w={9} h={6}><path d="M0.5 5l4-4 4 4" fill="none" stroke="#555" strokeWidth="1.5" /></Svg></div>
        <div className="h-[17px] bg-[#cdcdcd]" />
        <div className="flex-1" />
        <div className="h-[14px] flex items-center justify-center"><Svg w={9} h={6}><path d="M0.5 1l4 4 4-4" fill="none" stroke="#555" strokeWidth="1.5" /></Svg></div>
      </div>
    </div>
  </div>
);

/* ---------- status bar ---------- */
const StatusBar = () => (
  <div className="h-[22px] flex-none bg-[#f1f1f1] border-t border-[#c6c6c6] flex items-center text-[12px] text-[#555]">
    <span className="ml-[7px] tracking-[-1.2px]">デザイン ビュー</span>
    <span className="ml-auto text-[13px]">NumLock</span>
    <div className="ml-[31px]"><Svg w={15} h={14}><path d="M3.5 0.5h11v13h-11M0 4h6M0 10h6M3 2v3M3 9v3" fill="none" stroke="#666" /></Svg></div>
    <div className="ml-[22px]"><Svg w={15} h={13}><rect x="0.5" y="0.5" width="13" height="11" fill="none" stroke="#666" /><rect x="0" y="0" width="14" height="2.5" fill="#666" /><circle cx="10" cy="9" r="2.5" fill="#f1f1f1" stroke="#666" /></Svg></div>
    <div className="ml-[25px]"><Svg w={13} h={14}><path d="M0.5 0.5h12v13H0.5zM0 4.5h13M0 9.5h13" fill="none" stroke="#666" /></Svg></div>
    <div className="ml-[12px] w-[39px] self-stretch bg-[#c6c6c6] flex items-center justify-center">
      <Svg w={16} h={14}><path d="M0.5 0.5v7l6 0M9 8l6-6-2-2-6 6zM0.5 9.5h15v4H0.5z" fill="none" stroke="#666" /></Svg>
    </div>
  </div>
);

export default function App() {
  return (
    <div className={`w-[1366px] h-[728px] overflow-hidden flex flex-col bg-[#f1f1f1] ${sans}`}>
      <TitleBar />
      <TabBar />
      <Ribbon />
      <div className="flex-1 min-h-0 flex border-t border-[#c6c6c6] bg-[#e9e9e9]">
        <Nav />
        <Main />
        <PropSheet />
      </div>
      <StatusBar />
    </div>
  );
}
